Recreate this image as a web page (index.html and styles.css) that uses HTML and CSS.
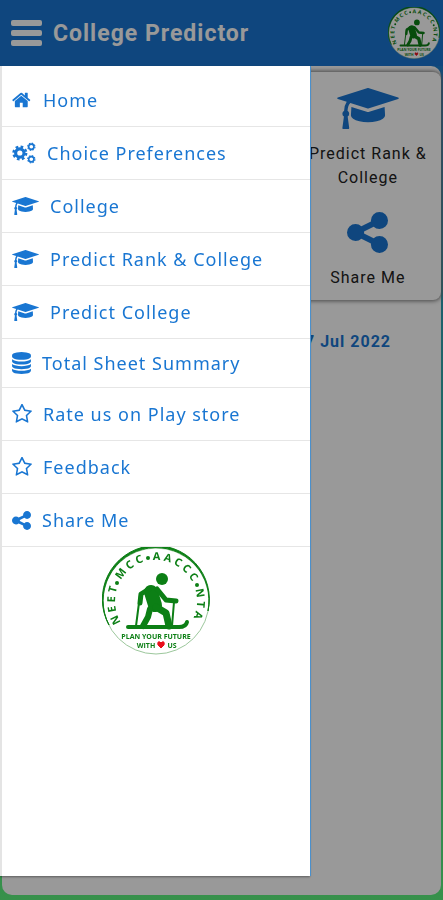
FILE: index.html
```html
<!DOCTYPE html>
<html lang="en">
<head>
  <meta charset="UTF-8">
  <meta name="viewport" content="width=device-width, initial-scale=1">
  <title>College Predictor</title>
  <link rel="stylesheet" href="styles.css">
</head>
<body>

  <!-- shared icons -->
  <svg class="sprite" aria-hidden="true">
    <symbol id="home" viewBox="0 0 1792 1792">
      <path d="M1408 992v480q0 26-19 45t-45 19h-384v-384h-256v384h-384q-26 0-45-19t-19-45v-480q0-1 .5-3t.5-3l575-474 575 474q1 2 1 6zm223-69l-62 74q-8 9-21 11h-3q-13 0-21-7l-692-577-692 577q-12 8-24 7-13-2-21-11l-62-74q-8-10-7-23.5t11-21.5l719-599q32-26 76-26t76 26l244 204v-195q0-14 9-23t23-9h192q14 0 23 9t9 23v408l219 182q10 8 11 21.5t-7 23.5z"/>
    </symbol>
    <symbol id="cogs" viewBox="0 0 46 42">
      <g fill="none" stroke="currentColor">
        <circle cx="15" cy="21" r="8" stroke-width="6"/>
        <circle cx="15" cy="21" r="12" stroke-width="5" stroke-dasharray="5 4.425"/>
        <circle cx="37" cy="9" r="5" stroke-width="3"/>
        <circle cx="37" cy="9" r="7" stroke-width="2" stroke-dasharray="3 2.498"/>
        <circle cx="37" cy="33" r="5" stroke-width="3"/>
        <circle cx="37" cy="33" r="7" stroke-width="2" stroke-dasharray="3 2.498"/>
      </g>
    </symbol>
    <symbol id="cap" viewBox="0 128 2304 1536">
      <path d="M1774 836l18 316q4 69-82 128t-235 93.5-323 34.5-323-34.5-235-93.5-82-128l18-316 574 181q22 7 48 7t48-7zm530-324q0 23-22 31l-1120 352q-4 1-10 1t-10-1l-652-206q-43 34-71 111.5t-34 178.5q63 36 63 109 0 69-58 107l58 433q2 14-8 25-9 11-24 11h-192q-15 0-24-11-10-11-8-25l58-433q-58-38-58-107 0-73 65-111 11-207 98-330l-333-104q-22-8-22-31t22-31l1120-352q4-1 10-1t10 1l1120 352q22 8 22 31z"/>
    </symbol>
    <symbol id="database" viewBox="128 0 1536 1792">
      <path d="M896 768q237 0 443-43t325-127v170q0 69-103 128t-280 93.5-385 34.5-385-34.5-280-93.5-103-128v-170q119 84 325 127t443 43zm0 768q237 0 443-43t325-127v170q0 69-103 128t-280 93.5-385 34.5-385-34.5-280-93.5-103-128v-170q119 84 325 127t443 43zm0-384q237 0 443-43t325-127v170q0 69-103 128t-280 93.5-385 34.5-385-34.5-280-93.5-103-128v-170q119 84 325 127t443 43zm0-1152q208 0 385 34.5t280 93.5 103 128v128q0 69-103 128t-280 93.5-385 34.5-385-34.5-280-93.5-103-128v-128q0-69 103-128t280-93.5 385-34.5z"/>
    </symbol>
    <symbol id="star" viewBox="64 64 1664 1664">
      <path d="M1201 1004l306-297-422-62-189-382-189 382-422 62 306 297-73 421 378-199 377 199zm527-357q0 22-26 48l-363 354 86 500q1 7 1 20 0 50-41 50-19 0-40-12l-449-236-449 236q-22 12-40 12-21 0-31.5-14.5t-10.5-35.5q0-6 2-20l86-500-364-354q-25-27-25-48 0-37 56-46l502-73 225-455q19-41 49-41t49 41l225 455 502 73q56 9 56 46z"/>
    </symbol>
    <symbol id="share" viewBox="128 128 1536 1536">
      <path d="M1344 1024q133 0 226.5 93.5t93.5 226.5-93.5 226.5-226.5 93.5-226.5-93.5-93.5-226.5q0-12 2-34l-360-180q-92 86-218 86-133 0-226.5-93.5t-93.5-226.5 93.5-226.5 226.5-93.5q126 0 218 86l360-180q-2-22-2-34 0-133 93.5-226.5t226.5-93.5 226.5 93.5 93.5 226.5-93.5 226.5-226.5 93.5q-126 0-218-86l-360 180q2 22 2 34t-2 34l360 180q92-86 218-86z"/>
    </symbol>
    <symbol id="logo" viewBox="0 0 108 108">
      <circle cx="54" cy="54" r="53" fill="#fff" stroke="#9cc79c"/>
      <path d="M7 78A53 53 0 1 1 106 64A53.5 53.5 0 1 0 7 78z" fill="#0c7f15" stroke="#0c7f15"/>
      <path id="ring" d="M18.500 74.500A41 41 0 1 1 89.500 74.500" fill="none"/>
      <g class="logo-ring">
        <text><textPath href="#ring" startOffset="10%">N E E T</textPath></text>
        <text><textPath href="#ring" startOffset="34%">M C C</textPath></text>
        <text><textPath href="#ring" startOffset="62%">A A C C C</textPath></text>
        <text><textPath href="#ring" startOffset="89%">N T A</textPath></text>
      </g>
      <g fill="#0c7f15">
        <circle cx="15" cy="36" r="2"/>
        <circle cx="46" cy="11" r="2"/>
        <circle cx="95" cy="38" r="2"/>
        <circle cx="60" cy="32" r="6"/>
      </g>
      <g fill="none" stroke="#0c7f15" stroke-linecap="round" stroke-linejoin="round">
        <path d="M49 45L53 58" stroke-width="14"/>
        <path d="M47 42L39 47L38 56" stroke-width="5"/>
        <path d="M55 42L64 53L74 54" stroke-width="5"/>
        <path d="M48 62L46 70L41 79" stroke-width="6"/>
        <path d="M54 60L64 66L67 79" stroke-width="7"/>
        <path d="M38 48L34 79M72 55L70 79" stroke-width="2"/>
        <path d="M26 80H77Q84 80 85 75" stroke-width="4"/>
      </g>
      <g class="logo-text">
        <text x="54" y="92">PLAN YOUR FUTURE</text>
        <text x="44" y="101">WITH</text>
        <text x="70" y="101">US</text>
      </g>
      <path d="M59 101l-3-3q-1-4 2-3l1 1 1-1q3-1 2 3z" fill="#e8101c" stroke="#e8101c"/>
    </symbol>
  </svg>

  <header class="topbar">
    <button class="menu-btn" aria-label="Menu"><span></span><span></span><span></span></button>
    <h1>College Predictor</h1>
    <svg class="avatar" role="img" aria-label="Logo"><use href="#logo"/></svg>
  </header>

  <main class="page">
    <section class="tiles">
      <a class="tile" href="#rank">
        <svg class="tile-cap"><use href="#cap"/></svg>
        Predict Rank &amp; College
      </a>
      <a class="tile" href="#share-app">
        <svg class="tile-share"><use href="#share"/></svg>
        Share Me
      </a>
    </section>
    <p class="updated">17 Jul 2022</p>
  </main>

  <div class="overlay"></div>

  <nav class="drawer">
    <ul>
      <li><a href="#"><svg class="ico"><use href="#home"/></svg>Home</a></li>
      <li><a href="#"><svg class="ico ico-cogs"><use href="#cogs"/></svg>Choice Preferences</a></li>
      <li><a href="#"><svg class="ico ico-cap"><use href="#cap"/></svg>College</a></li>
      <li><a href="#"><svg class="ico ico-cap"><use href="#cap"/></svg>Predict Rank &amp; College</a></li>
      <li><a href="#"><svg class="ico ico-cap"><use href="#cap"/></svg>Predict College</a></li>
      <li class="short"><a href="#"><svg class="ico ico-db"><use href="#database"/></svg>Total Sheet Summary</a></li>
      <li><a href="#"><svg class="ico"><use href="#star"/></svg>Rate us on Play store</a></li>
      <li><a href="#"><svg class="ico"><use href="#star"/></svg>Feedback</a></li>
      <li><a href="#"><svg class="ico ico-share"><use href="#share"/></svg>Share Me</a></li>
    </ul>
    <svg class="drawer-logo" role="img" aria-label="Logo"><use href="#logo"/></svg>
  </nav>

</body>
</html>
```

FILE: styles.css
```css
* {
  box-sizing: border-box;
}

body {
  margin: 0;
  min-height: 100vh;
  display: flex;
  flex-direction: column;
  background: linear-gradient(#1976d2, #5cf27d);
  font-family: Roboto, sans-serif;
  letter-spacing: 1px;
}

.sprite {
  position: absolute;
  width: 0;
  height: 0;
}

svg {
  fill: currentColor;
  flex-shrink: 0;
}

/* top bar */
.topbar {
  display: flex;
  align-items: center;
  height: 66px;
  padding: 0 3px 0 11px;
  background: #1976d2;
  color: #fff;
}

.topbar h1 {
  flex: 1;
  margin: 0 0 0 11px;
  font-size: 23px;
  font-weight: 700;
}

.menu-btn {
  display: flex;
  flex-direction: column;
  gap: 4px;
  padding: 0;
  border: none;
  background: none;
}

.menu-btn span {
  width: 31px;
  height: 6px;
  border-radius: 2px;
  background: #fff;
}

.avatar {
  width: 52px;
  height: 52px;
}

/* page */
.page {
  flex: 1;
  margin: 0 2px 5px;
  padding-top: 6px;
  border-radius: 10px;
  background: #fff;
}

.tiles {
  display: grid;
  grid-template-columns: repeat(3, 1fr);
  row-gap: 22px;
  padding: 16px 0 10px;
  border-radius: 8px;
  box-shadow: 0 0 4px 1px #777;
}

.tile {
  grid-column: 3;
  display: flex;
  flex-direction: column;
  align-items: center;
  color: #222;
  font-size: 16px;
  line-height: 24px;
  text-align: center;
  text-decoration: none;
}

.tile svg {
  color: #1976d2;
}

.tile-cap {
  width: 62px;
  height: 41px;
  margin-bottom: 13px;
}

.tile-share {
  width: 41px;
  height: 41px;
  margin-bottom: 13px;
}

.updated {
  margin: 30px 50px 0;
  color: #1976d2;
  font-size: 16px;
  font-weight: 700;
  line-height: 24px;
  text-align: right;
}

.overlay {
  position: fixed;
  inset: 0;
  background: rgba(0, 0, 0, 0.4);
}

/* side menu */
.drawer {
  position: fixed;
  top: 66px;
  bottom: 24px;
  left: 0;
  width: 70%;
  background: #fff;
  border-left: 2px solid #e4e4e4;
  box-shadow: 1px 0 0 #4a90cc, 0 1px 2px rgba(0, 0, 0, 0.4);
}

.drawer ul {
  margin: 0;
  padding: 8px 0 0;
  list-style: none;
}

.drawer a {
  display: flex;
  align-items: center;
  gap: 11px;
  height: 53px;
  padding-left: 10px;
  border-bottom: 1px solid #e6e6e6;
  color: #1976d2;
  font-family: "Noto Sans", "Open Sans", sans-serif;
  font-size: 18px;
  text-decoration: none;
}

.drawer .short a {
  height: 49px;
}

.ico {
  width: 20px;
  height: 20px;
}

.ico-cogs {
  width: 24px;
  height: 22px;
}

.ico-cap {
  width: 27px;
  height: 18px;
}

.ico-db {
  width: 19px;
  height: 22px;
}

.ico-share {
  width: 19px;
  height: 19px;
}

.drawer-logo {
  display: block;
  width: 108px;
  height: 108px;
  margin: 0 auto;
}

.logo-ring text,
.logo-text text {
  fill: #0c7f15;
  font-family: "Open Sans", sans-serif;
  font-weight: 700;
  text-anchor: middle;
  letter-spacing: 0;
}

.logo-ring text {
  font-size: 11px;
}

.logo-text text {
  font-size: 7px;
}
```
